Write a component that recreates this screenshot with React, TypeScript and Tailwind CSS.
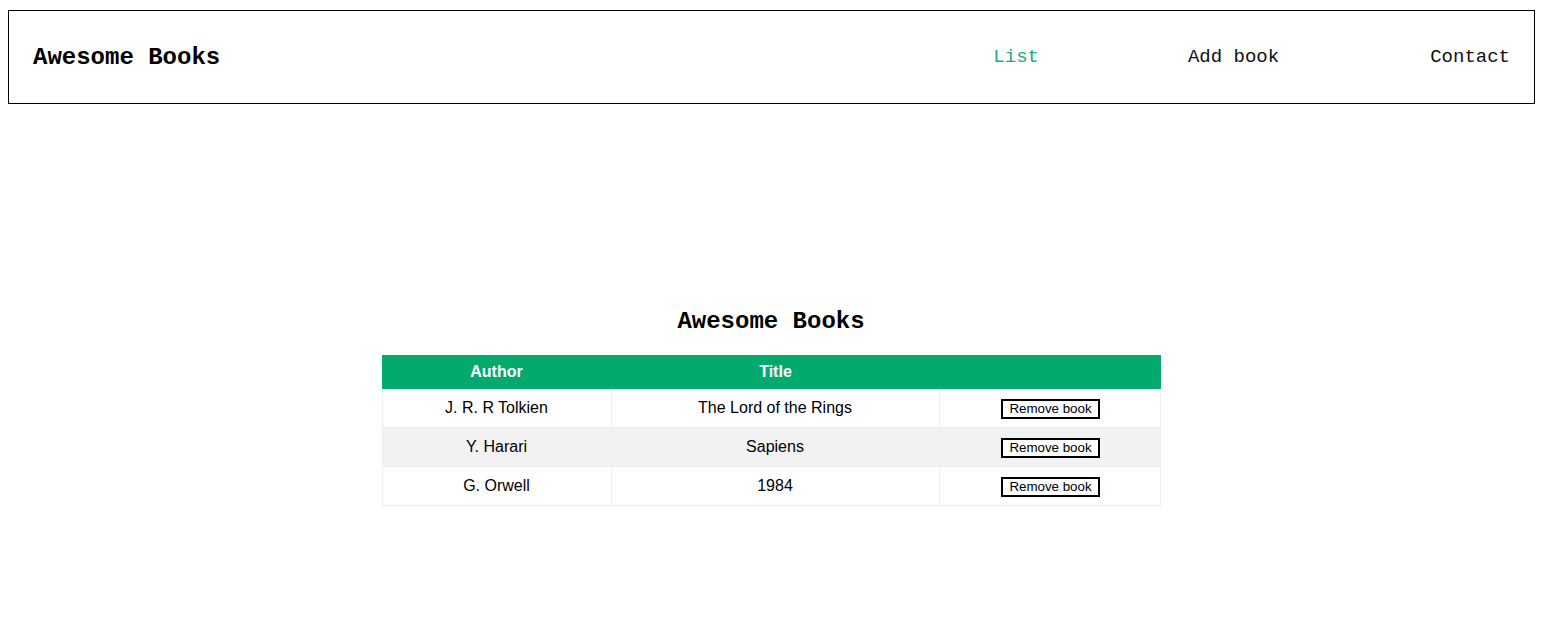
import React from "react";

const books = [
  { author: "J. R. R Tolkien", title: "The Lord of the Rings" },
  { author: "Y. Harari", title: "Sapiens" },
  { author: "G. Orwell", title: "1984" },
];

const mono = { fontFamily: '"Liberation Mono", "Courier New", monospace' };
const sans = { fontFamily: '"Liberation Sans", Arial, sans-serif' };

export default function App() {
  return (
    <div className="min-h-[633px] bg-white text-black">
      <header className="ml-2 mr-[9px] mt-[10px] flex h-[94px] items-center justify-between border border-black pl-6 pr-6">
        <h1 className="text-[24px] font-bold leading-[27px]" style={mono}>
          Awesome Books
        </h1>
        <nav className="flex items-center text-[19px] leading-[22px]" style={mono}>
          <a className="text-[#1ea97a]">List</a>
          <a className="ml-[149px] text-[#111]">Add book</a>
          <a className="ml-[151px] text-[#111]">Contact</a>
        </nav>
      </header>

      <main className="flex flex-col items-center pt-[204px]">
        <h2 className="ml-[-2px] text-[24px] font-bold leading-[27px]" style={mono}>
          Awesome Books
        </h2>
        <table
          className="ml-[-2px] mt-[20px] w-[779px] border-separate border-spacing-0 text-[16px]"
          style={sans}
        >
          <thead>
            <tr className="bg-[#04a96d] text-white">
              <th className="h-[34px] w-[230px] p-0 text-center font-bold">Author</th>
              <th className="h-[34px] w-[328px] p-0 text-center font-bold">Title</th>
              <th className="h-[34px] w-[221px] p-0"></th>
            </tr>
          </thead>
          <tbody>
            {books.map((b, i) => (
              <tr key={b.title} className={i % 2 === 1 ? "bg-[#f2f2f2]" : "bg-white"}>
                <td className="h-[39px] border border-t-0 border-[#eeeeee] p-0 text-center align-middle">
                  {b.author}
                </td>
                <td className="h-[39px] border border-t-0 border-l-0 border-[#eeeeee] p-0 text-center align-middle">
                  {b.title}
                </td>
                <td className="h-[39px] border border-t-0 border-l-0 border-[#eeeeee] p-0 text-center align-middle">
                  <button
                    className="ml-[2px] border-2 border-black bg-white px-[6.5px] py-[1px] text-[13.33px] leading-[14px] text-black"
                    style={sans}
                  >
                    Remove book
                  </button>
                </td>
              </tr>
            ))}
          </tbody>
        </table>
      </main>
    </div>
  );
}
